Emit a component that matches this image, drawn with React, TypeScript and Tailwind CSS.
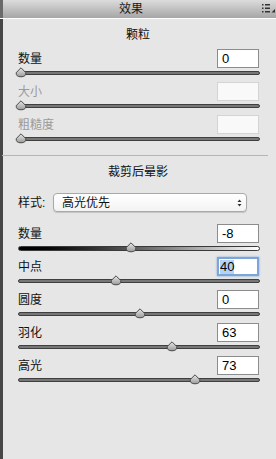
import React from "react";

const font = { fontFamily: '"Liberation Sans", "Noto Sans CJK SC", sans-serif' };

function Thumb({ x }: { x: number }) {
  return (
    <svg
      className="absolute"
      style={{ left: x - 6, top: -5 }}
      width="12"
      height="11"
      viewBox="0 0 12 11"
    >
      <defs>
        <linearGradient id="tg" x1="0" y1="0" x2="0" y2="1">
          <stop offset="0" stopColor="#e8e8e8" />
          <stop offset="1" stopColor="#9a9a9a" />
        </linearGradient>
      </defs>
      <path
        d="M6 0.8 L10.8 5.6 Q11.2 9.8 6 9.8 Q0.8 9.8 1.2 5.6 Z"
        fill="url(#tg)"
        stroke="#4a4a4a"
        strokeWidth="1"
      />
    </svg>
  );
}

function Block({
  label,
  value,
  thumb,
  disabled,
  focused,
  gradient,
}: {
  label: string;
  value: string;
  thumb: number;
  disabled?: boolean;
  focused?: boolean;
  gradient?: boolean;
}) {
  return (
    <div className="flex flex-col">
      <div className="flex h-[19px] items-center justify-between pl-[18px] pr-[17px]">
        <span
          className={`text-[12px] leading-[16px] ${disabled ? "text-[#9a9a9a]" : "text-[#111]"}`}
        >
          {label}
        </span>
        {focused ? (
          <div className="flex h-[19px] w-[42px] items-center border-2 border-[#7aa6dc] bg-white pl-[1px] shadow-[0_0_2px_#7aa6dc]">
            <span className="bg-[#b3d2f7] text-[13px] leading-[14px] text-black">{value}</span>
          </div>
        ) : (
          <div
            className={`flex h-[19px] w-[42px] items-center border pl-[4px] text-[13px] leading-[15px] text-black ${disabled ? "border-[#d4d4d4] bg-[#f9f9f9]" : "border-[#8c8c8c] bg-white"}`}
          >
            {value}
          </div>
        )}
      </div>
      <div className="h-[14px]">
        <div
          className={`relative ml-[18px] mt-[3px] w-[242px] rounded-full border ${gradient ? "h-[5px] border-[#3a3a3a] bg-gradient-to-r from-black to-white" : "h-[4px] border-[#3f3f3f] bg-[#777]"}`}
        >
          <Thumb x={thumb} />
        </div>
      </div>
    </div>
  );
}

export default function App() {
  return (
    <div
      className="flex h-[459px] w-[276px] flex-col bg-[#e6e6e6] shadow-[inset_3px_0_0_#474747]"
      style={font}
    >
      <div className="relative flex h-[18px] items-center justify-center bg-gradient-to-b from-[#dcdcdc] to-[#a6a6a6] pr-[14px] shadow-[inset_3px_0_0_#6a6a6a]">
        <span className="text-[12px] leading-[16px] text-[#1a1a1a]">效果</span>
        <svg className="absolute left-[262px] top-[4px]" width="13" height="9" viewBox="0 0 13 9">
          <rect x="0" y="0" width="1.5" height="1.5" fill="#333" />
          <rect x="0" y="3.5" width="1.5" height="1.5" fill="#333" />
          <rect x="0" y="7" width="1.5" height="1.5" fill="#333" />
          <rect x="3" y="0" width="5" height="1.5" fill="#333" />
          <rect x="3" y="3.5" width="5" height="1.5" fill="#333" />
          <rect x="3" y="7" width="5" height="1.5" fill="#333" />
          <path d="M9.5 8.5 L13 5 L13 8.5 Z" fill="#333" />
        </svg>
      </div>
      <div className="h-px bg-white" />

      <div className="mt-[8px] h-[16px] text-center text-[12px] leading-[16px] text-[#111]">颗粒</div>

      <div className="mt-[6px]">
        <Block label="数量" value="0" thumb={2} />
        <Block label="大小" value="" thumb={2} disabled />
        <Block label="粗糙度" value="" thumb={2} disabled />
      </div>

      <div className="ml-[2px] mr-[8px] mt-[7px] h-px bg-[#b5b5b5]" />

      <div className="mt-[8px] h-[16px] text-center text-[12px] leading-[16px] text-[#111]">裁剪后晕影</div>

      <div className="mt-[13px] flex h-[19px] items-center pl-[18px]">
        <span className="w-[35px] text-[12px] leading-[16px] text-[#111]">样式:</span>
        <div className="flex h-[19px] w-[194px] items-center justify-between rounded-[4px] border border-[#a8a8a8] bg-gradient-to-b from-white to-[#f3f3f3] pl-[8px] pr-[4px] shadow-[0_1px_1px_rgba(0,0,0,0.15)]">
          <span className="text-[12px] leading-[16px] text-[#111]">高光优先</span>
          <svg width="5" height="8" viewBox="0 0 5 8">
            <path d="M0.5 3 L2.5 0.5 L4.5 3 Z" fill="#333" />
            <path d="M0.5 5 L2.5 7.5 L4.5 5 Z" fill="#333" />
          </svg>
        </div>
      </div>

      <div className="mt-[12px]">
        <Block label="数量" value="-8" thumb={112} gradient />
        <Block label="中点" value="40" thumb={97} focused />
        <Block label="圆度" value="0" thumb={121} />
        <Block label="羽化" value="63" thumb={153} />
        <Block label="高光" value="73" thumb={176} />
      </div>
    </div>
  );
}
